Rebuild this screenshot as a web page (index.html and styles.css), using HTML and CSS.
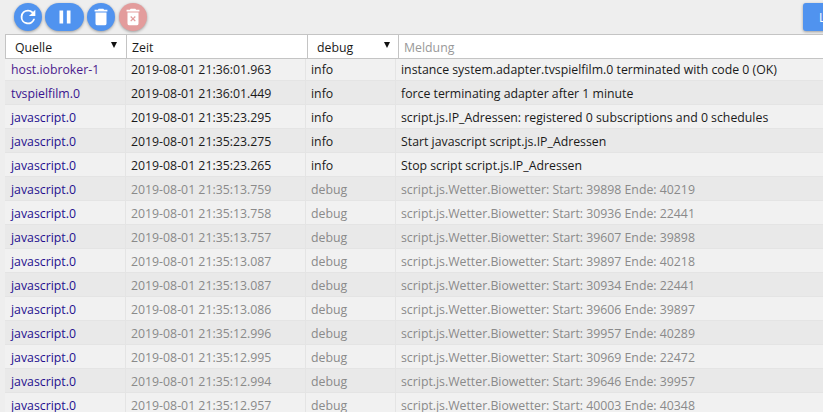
FILE: index.html
```html
<!DOCTYPE html>
<html lang="de">
<head>
<meta charset="utf-8">
<title>Log</title>
<link rel="stylesheet" href="styles.css">
</head>
<body>
<div class="toolbar">
  <button class="fab"><svg viewBox="0 0 24 24" width="22" height="22"><path fill="#fff" d="M17.65 6.35A7.96 7.96 0 0 0 12 4a8 8 0 1 0 7.74 10h-2.08A6 6 0 1 1 12 6c1.66 0 3.14.69 4.22 1.78L13 11h7V4z"/></svg></button>
  <button class="fab wide"><svg viewBox="0 0 24 24" width="22" height="22"><path fill="#fff" d="M6 19h4V5H6zm8-14v14h4V5z"/></svg></button>
  <button class="fab"><svg viewBox="0 0 24 24" width="22" height="22"><path fill="#fff" d="M6 19a2 2 0 0 0 2 2h8a2 2 0 0 0 2-2V7H6zM19 4h-3.500l-1-1h-5l-1 1H5v2h14z"/></svg></button>
  <button class="fab off"><svg viewBox="0 0 24 24" width="22" height="22"><path fill="#fff" fill-rule="evenodd" d="M6 19a2 2 0 0 0 2 2h8a2 2 0 0 0 2-2V7H6zM15.500 4l-1-1h-5l-1 1H5v2h14V4zM10 11l2 2 2-2 1 1-2 2 2 2-1 1-2-2-2 2-1-1 2-2-2-2z"/></svg></button>
  <button class="square">L</button>
</div>
<div class="head">
  <div class="hc h1"><span>Quelle</span><i class="arrow"></i></div>
  <div class="hc h2"><span>Zeit</span></div>
  <div class="hc h3"><span>debug</span><i class="arrow"></i></div>
  <div class="hc h4"><span>Meldung</span></div>
</div>
<div class="rows">
  <div class="row"><div class="c1 host">host.iobroker-1</div><div class="c2">2019-08-01 21:36:01.963</div><div class="c3">info</div><div class="c4">instance system.adapter.tvspielfilm.0 terminated with code 0 (OK)</div></div>
  <div class="row"><div class="c1 tv">tvspielfilm.0</div><div class="c2">2019-08-01 21:36:01.449</div><div class="c3">info</div><div class="c4">force terminating adapter after 1 minute</div></div>
  <div class="row"><div class="c1">javascript.0</div><div class="c2">2019-08-01 21:35:23.295</div><div class="c3">info</div><div class="c4">script.js.IP_Adressen: registered 0 subscriptions and 0 schedules</div></div>
  <div class="row"><div class="c1">javascript.0</div><div class="c2">2019-08-01 21:35:23.275</div><div class="c3">info</div><div class="c4">Start javascript script.js.IP_Adressen</div></div>
  <div class="row"><div class="c1">javascript.0</div><div class="c2">2019-08-01 21:35:23.265</div><div class="c3">info</div><div class="c4">Stop script script.js.IP_Adressen</div></div>
  <div class="row dbg"><div class="c1">javascript.0</div><div class="c2">2019-08-01 21:35:13.759</div><div class="c3">debug</div><div class="c4">script.js.Wetter.Biowetter: Start: 39898 Ende: 40219</div></div>
  <div class="row dbg"><div class="c1">javascript.0</div><div class="c2">2019-08-01 21:35:13.758</div><div class="c3">debug</div><div class="c4">script.js.Wetter.Biowetter: Start: 30936 Ende: 22441</div></div>
  <div class="row dbg"><div class="c1">javascript.0</div><div class="c2">2019-08-01 21:35:13.757</div><div class="c3">debug</div><div class="c4">script.js.Wetter.Biowetter: Start: 39607 Ende: 39898</div></div>
  <div class="row dbg"><div class="c1">javascript.0</div><div class="c2">2019-08-01 21:35:13.087</div><div class="c3">debug</div><div class="c4">script.js.Wetter.Biowetter: Start: 39897 Ende: 40218</div></div>
  <div class="row dbg"><div class="c1">javascript.0</div><div class="c2">2019-08-01 21:35:13.087</div><div class="c3">debug</div><div class="c4">script.js.Wetter.Biowetter: Start: 30934 Ende: 22441</div></div>
  <div class="row dbg"><div class="c1">javascript.0</div><div class="c2">2019-08-01 21:35:13.086</div><div class="c3">debug</div><div class="c4">script.js.Wetter.Biowetter: Start: 39606 Ende: 39897</div></div>
  <div class="row dbg"><div class="c1">javascript.0</div><div class="c2">2019-08-01 21:35:12.996</div><div class="c3">debug</div><div class="c4">script.js.Wetter.Biowetter: Start: 39957 Ende: 40289</div></div>
  <div class="row dbg"><div class="c1">javascript.0</div><div class="c2">2019-08-01 21:35:12.995</div><div class="c3">debug</div><div class="c4">script.js.Wetter.Biowetter: Start: 30969 Ende: 22472</div></div>
  <div class="row dbg"><div class="c1">javascript.0</div><div class="c2">2019-08-01 21:35:12.994</div><div class="c3">debug</div><div class="c4">script.js.Wetter.Biowetter: Start: 39646 Ende: 39957</div></div>
  <div class="row dbg"><div class="c1">javascript.0</div><div class="c2">2019-08-01 21:35:12.957</div><div class="c3">debug</div><div class="c4">script.js.Wetter.Biowetter: Start: 40003 Ende: 40348</div></div>
</div>
</body>
</html>
```

FILE: styles.css
```css
* { box-sizing: border-box; }
html, body { margin: 0; height: 100%; overflow: hidden; }
body { background: #eeeeee; font-family: "Open Sans", sans-serif; font-size: 12.3px; color: #1a1a1a; width: 823px; height: 412px; }
.toolbar { display: flex; height: 34px; padding: 3px 0 0 14px; gap: 3px; position: relative; }
.fab { width: 28px; height: 28px; border: 0; padding: 0; border-radius: 14px; background: #5093ef; box-shadow: 0 1px 3px rgba(0,0,0,.35); display: flex; align-items: center; justify-content: center; }
.fab.wide { width: 39px; }
.fab.off { background: #e39c9c; margin-left: 1px; }
.square { position: absolute; left: 803px; top: 3px; width: 60px; height: 28px; border: 0; border-radius: 3px; background: #5093ef; color: #fff; font: 12px "Open Sans", sans-serif; text-align: left; padding-left: 16px; box-shadow: 0 1px 3px rgba(0,0,0,.35); }
.head { display: flex; margin-left: 5px; height: 25px; background: #fff; border-top: 1px solid #c4c4c4; border-bottom: 1px solid #c4c4c4; border-left: 1px solid #c4c4c4; position: relative; z-index: 1; }
.hc { display: flex; align-items: center; justify-content: space-between; border-right: 1px solid #c4c4c4; padding-top: 2px; }
.h1 { width: 121px; padding-left: 9px; padding-right: 9px; }
.h2 { width: 181px; padding-left: 5px; }
.h3 { width: 91px; padding-left: 9px; padding-right: 8px; }
.h4 { flex: 1; padding-left: 5px; color: #999; border-right: 0; }
.arrow { width: 0; height: 0; border-left: 3px solid transparent; border-right: 3px solid transparent; border-top: 6px solid #111; margin-bottom: 5px; }
.rows { margin-top: -2px; }
.row { display: flex; height: 24px; margin-left: 5px; background: #f1f1f1; border-bottom: 1px solid #e4e4e4; align-items: stretch; }
.row:nth-child(even) { background: #e9e9e9; }
.row > div { display: flex; align-items: center; padding-left: 5px; border-right: 1px solid #e4e4e4; white-space: nowrap; padding-top: 1px; }
.row > .c1 { width: 121px; color: #25108f; padding-left: 6px; }
.row > .c1.host { color: #4b1a8c; }
.row > .c1.tv { color: #3a1590; }
.c2 { width: 180px; }
.c3 { width: 90px; }
.c4 { flex: 1; border-right: 0 !important; }
.dbg .c2, .dbg .c3, .dbg .c4 { color: #8a8a8a; }
```
